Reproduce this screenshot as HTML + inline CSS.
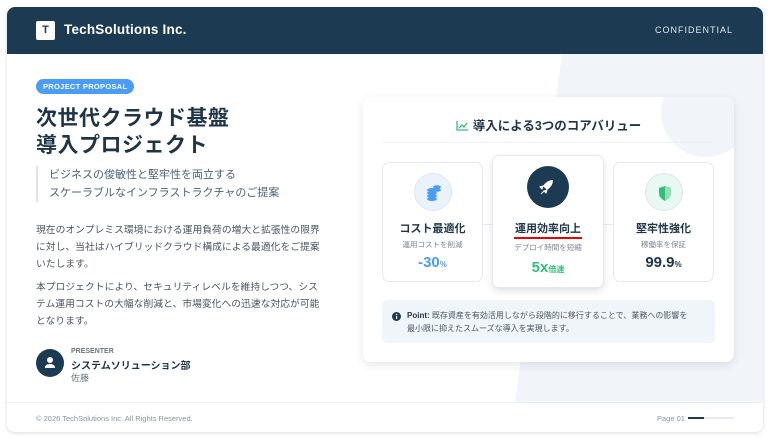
<!DOCTYPE html>
<html><head><meta charset="utf-8"><style>
*{box-sizing:border-box;margin:0;padding:0}
body{width:770px;height:439px;background:#fff;font-family:"Liberation Sans","Noto Sans CJK JP",sans-serif;position:relative;overflow:hidden;color:#1e3a52}
.card{position:absolute;left:7px;top:7px;width:756px;height:425px;border-radius:8px;background:#fff;box-shadow:0 1px 4px rgba(0,0,0,.15);overflow:hidden}
.bg{position:absolute;left:0;top:0;width:756px;height:425px}
.hdr{position:absolute;left:0;top:0;width:756px;height:47px;background:#1c3a52;color:#fff}
.logo{position:absolute;left:29px;top:14px;width:19px;height:19px;background:#fff;border-radius:2px;color:#1c3a52;font-weight:bold;font-size:11px;text-align:center;line-height:19px}
.brand{position:absolute;left:57px;top:15px;font-size:13.5px;font-weight:bold;letter-spacing:.2px}
.conf{position:absolute;right:30px;top:18px;font-size:9px;letter-spacing:1px;color:#dfe6ee}
.abs{position:absolute}
.pill{left:29px;top:72px;background:#4a9cf5;color:#fff;font-size:7.5px;font-weight:bold;padding:3px 7px;border-radius:8px;letter-spacing:.3px}
h1{position:absolute;left:29px;top:98px;font-size:21px;line-height:27px;font-weight:bold;color:#1e3447;letter-spacing:.5px}
.sub{left:29px;top:159px;border-left:2px solid #dde3ea;padding-left:11px;font-size:11px;line-height:18px;color:#4a6378}
.body{left:29px;white-space:nowrap;font-size:9.8px;line-height:17px;color:#4b5563}
.av{left:29px;top:342px;width:28px;height:28px;border-radius:50%;background:#1c3a52}
.main{left:356px;top:90px;width:371px;height:265px;background:#fff;border-radius:8px;box-shadow:0 3px 10px rgba(0,0,0,.1);overflow:hidden}
.vc{position:absolute;background:#fff;border:1px solid #e6e9ee;border-radius:7px;text-align:center}
.ic{position:absolute;left:50%;margin-left:-19px;width:38px;height:38px;border-radius:50%}
.t{position:absolute;left:0;right:0;font-size:11px;font-weight:bold;color:#1e3447}
.s{position:absolute;left:0;right:0;font-size:7.5px;color:#7b8794}
.v{position:absolute;left:0;right:0;font-size:15px;font-weight:bold}
.v small{font-size:8px}
</style></head><body>
<div class="card">
<svg class="bg" viewBox="0 0 756 425"><polygon points="555,47 756,47 756,395 508,395" fill="#f1f5f9"/></svg>
<div class="hdr"><div class="logo">T</div><div class="brand">TechSolutions Inc.</div><div class="conf">CONFIDENTIAL</div></div>
<div class="abs pill">PROJECT PROPOSAL</div>
<h1>次世代クラウド基盤<br>導入プロジェクト</h1>
<div class="abs sub">ビジネスの俊敏性と堅牢性を両立する<br>スケーラブルなインフラストラクチャのご提案</div>
<div class="abs body" style="top:215px">現在のオンプレミス環境における運用負荷の増大と拡張性の限界<br>に対し、当社はハイブリッドクラウド構成による最適化をご提案<br>いたします。</div>
<div class="abs body" style="top:272px">本プロジェクトにより、セキュリティレベルを維持しつつ、シス<br>テム運用コストの大幅な削減と、市場変化への迅速な対応が可能<br>となります。</div>
<div class="abs av"><svg width="28" height="28" viewBox="0 0 28 28"><circle cx="14" cy="11" r="3" fill="#fff"/><path d="M9 19 q0-4 5-4 q5 0 5 4 z" fill="#fff"/></svg></div>
<div class="abs" style="left:64px;top:341px;font-size:7px;font-weight:bold;color:#6b7280">PRESENTER</div>
<div class="abs" style="left:64px;top:350px;font-size:10px;font-weight:bold;color:#1e3447">システムソリューション部</div>
<div class="abs" style="left:64px;top:364px;font-size:9px;color:#6b7280">佐藤</div>

<div class="abs main">
<div class="abs" style="left:298px;top:-30px;width:90px;height:90px;border-radius:50%;background:#f1f5f9"></div>
<div class="abs" style="left:0;right:0;top:18px;text-align:center;font-size:12.5px;font-weight:bold;color:#1e3447"><svg width="12" height="10" viewBox="0 0 12 10" style="vertical-align:-1px;margin-right:5px"><path d="M1 0v9h11" stroke="#2fbf7a" stroke-width="1.3" fill="none"/><path d="M3 7l3-3 2 2 3-4" stroke="#2fbf7a" stroke-width="1.3" fill="none"/></svg>導入による3つのコアバリュー</div>
<div class="abs" style="left:20px;right:20px;top:45px;height:1px;background:#eef1f4"></div>
<div class="abs" style="left:60px;right:60px;top:127px;height:1px;background:#e6e9ee"></div>
<div class="vc" style="left:19px;top:65px;width:101px;height:120px">
<div class="ic" style="top:10px;background:#eaf2fd;border:1px solid #dfe6ee"><svg width="38" height="38" viewBox="0 0 38 38"><g fill="#4a9cf5"><ellipse cx="17" cy="16" rx="5" ry="2"/><ellipse cx="17" cy="19" rx="5" ry="2"/><ellipse cx="17" cy="22" rx="5" ry="2"/><ellipse cx="17" cy="25" rx="5" ry="2"/><ellipse cx="22" cy="13" rx="4" ry="1.8"/><ellipse cx="22" cy="16" rx="4" ry="1.8"/></g></svg></div>
<div class="t" style="top:57px">コスト最適化</div><div class="s" style="top:76px">運用コストを削減</div>
<div class="v" style="top:91px;color:#4a9cf5">-30<small>%</small></div></div>
<div class="vc" style="left:129px;top:58px;width:112px;height:133px;box-shadow:0 3px 8px rgba(0,0,0,.12)">
<div class="ic" style="top:10px;margin-left:-21px;width:42px;height:42px;background:#1c3a52"><svg width="42" height="42" viewBox="0 0 42 42"><path d="M26 14 q-6 0-10 6 l4 4 q6-4 6-10z" fill="#fff"/><path d="M16 20 l-3 1 2 2z M20 24 l-1 3 -2-2z M17 25 l-3 3" fill="#fff" stroke="#fff"/></svg></div>
<div class="t" style="top:64px">運用効率向上</div>
<div class="abs" style="left:21px;top:81px;width:68px;height:2px;background:#e00"></div>
<div class="s" style="top:86px">デプロイ時間を短縮</div>
<div class="v" style="top:103px;color:#2fbf7a">5x<small>倍速</small></div></div>
<div class="vc" style="left:250px;top:65px;width:101px;height:120px">
<div class="ic" style="top:10px;background:#e9f8f0;border:1px solid #dfe6ee"><svg width="38" height="38" viewBox="0 0 38 38"><path d="M19 12 l6 2 v5 q0 5-6 8 q-6-3-6-8 v-5z" fill="#2fbf7a"/><path d="M19 12 v15 q6-3 6-8 v-5z" fill="#8ee0b8"/></svg></div>
<div class="t" style="top:57px">堅牢性強化</div><div class="s" style="top:76px">稼働率を保証</div>
<div class="v" style="top:91px;color:#1e3447">99.9<small>%</small></div></div>
<div class="abs" style="left:19px;top:203px;width:333px;height:43px;background:#f0f5fa;border-radius:5px">
<svg class="abs" style="left:10px;top:12px" width="9" height="9" viewBox="0 0 9 9"><circle cx="4.5" cy="4.5" r="4.5" fill="#1c3a52"/><rect x="4" y="4" width="1.2" height="3" fill="#fff"/><circle cx="4.6" cy="2.6" r=".7" fill="#fff"/></svg>
<div class="abs" style="left:25px;top:9px;width:285px;font-size:8px;line-height:13px;color:#4b5563"><b style="color:#1e3447">Point:</b> 既存資産を有効活用しながら段階的に移行することで、業務への影響を最小限に抑えたスムーズな導入を実現します。</div>
</div>
</div>

<div class="abs" style="left:0;top:395px;width:756px;height:30px;background:#fff;border-top:1px solid #edf0f3"></div>
<div class="abs" style="left:29px;top:407px;font-size:7.5px;color:#8a94a0">© 2026 TechSolutions Inc. All Rights Reserved.</div>
<div class="abs" style="left:650px;top:407px;font-size:7.5px;color:#8a94a0">Page 01</div>
<div class="abs" style="left:681px;top:410px;width:46px;height:2px;background:#e6e9ee"><div style="width:16px;height:2px;background:#1c3a52"></div></div>
</div>
</body></html>
